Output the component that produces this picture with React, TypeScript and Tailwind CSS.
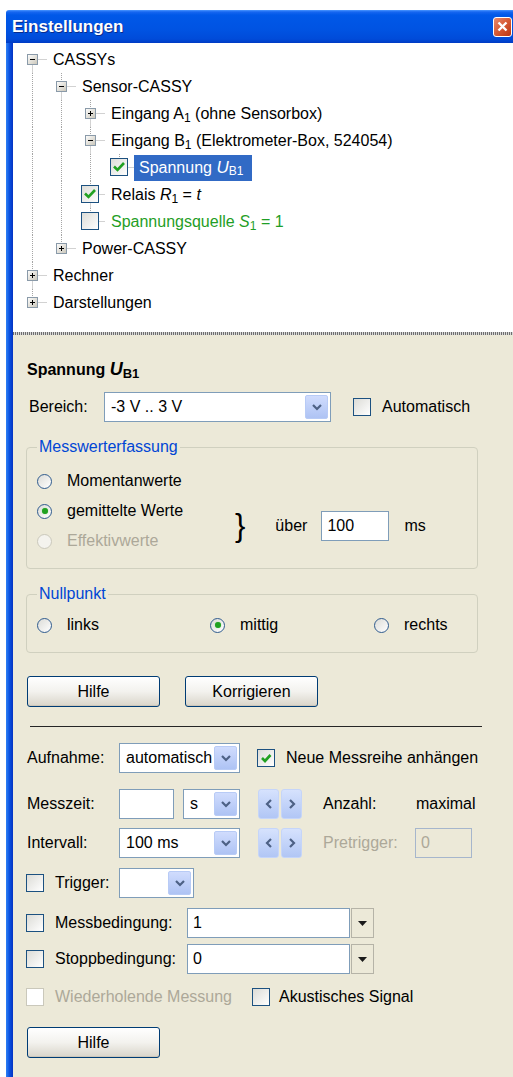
import type { ReactNode } from 'react';

const DOT = '#A5A5A5';

type Glyph = 'minus' | 'plus' | 'check' | 'empty';

type TreeItem = {
  pipes: number;
  glyph: Glyph;
  top: boolean;
  bottom: boolean;
  label: ReactNode;
  selected?: boolean;
  green?: boolean;
};

const tree: TreeItem[] = [
  { pipes: 0, glyph: 'minus', top: false, bottom: true, label: 'CASSYs' },
  { pipes: 1, glyph: 'minus', top: true, bottom: true, label: 'Sensor-CASSY' },
  {
    pipes: 2,
    glyph: 'plus',
    top: true,
    bottom: true,
    label: (
      <>
        Eingang A<sub className="text-[12px]">1</sub> (ohne Sensorbox)
      </>
    ),
  },
  {
    pipes: 2,
    glyph: 'minus',
    top: true,
    bottom: true,
    label: (
      <>
        Eingang B<sub className="text-[12px]">1</sub> (Elektrometer-Box, 524054)
      </>
    ),
  },
  {
    pipes: 3,
    glyph: 'check',
    top: true,
    bottom: false,
    selected: true,
    label: (
      <>
        Spannung&nbsp;<i className="text-[17px]">U</i>
        <sub className="text-[12px]">B1</sub>
      </>
    ),
  },
  {
    pipes: 2,
    glyph: 'check',
    top: true,
    bottom: true,
    label: (
      <>
        Relais <i>R</i>
        <sub className="text-[12px]">1</sub> = <i>t</i>
      </>
    ),
  },
  {
    pipes: 2,
    glyph: 'empty',
    top: true,
    bottom: false,
    green: true,
    label: (
      <>
        Spannungsquelle <i>S</i>
        <sub className="text-[12px]">1</sub> = 1
      </>
    ),
  },
  { pipes: 1, glyph: 'plus', top: true, bottom: false, label: 'Power-CASSY' },
  { pipes: 0, glyph: 'plus', top: true, bottom: true, label: 'Rechner' },
  { pipes: 0, glyph: 'plus', top: true, bottom: false, label: 'Darstellungen' },
];

function PipeCell() {
  return (
    <svg width="29" height="27" className="shrink-0">
      <line x1="14.5" y1="0" x2="14.5" y2="27" stroke={DOT} strokeDasharray="1 1" />
    </svg>
  );
}

function NodeCell({ glyph, top, bottom }: { glyph: Glyph; top: boolean; bottom: boolean }) {
  return (
    <svg width="29" height="27" className="shrink-0">
      <defs>
        <linearGradient id="tbox" x1="0" y1="0" x2="1" y2="1">
          <stop offset="0" stopColor="#ffffff" />
          <stop offset="1" stopColor="#c9c5b8" />
        </linearGradient>
        <linearGradient id="tchk" x1="0" y1="0" x2="1" y2="1">
          <stop offset="0" stopColor="#dcdcd7" />
          <stop offset="1" stopColor="#ffffff" />
        </linearGradient>
      </defs>
      {top && <line x1="14.5" y1="0" x2="14.5" y2="13.5" stroke={DOT} strokeDasharray="1 1" />}
      {bottom && <line x1="14.5" y1="13.5" x2="14.5" y2="27" stroke={DOT} strokeDasharray="1 1" />}
      <line x1="14.5" y1="13.5" x2="29" y2="13.5" stroke={DOT} strokeDasharray="1 1" />
      {(glyph === 'minus' || glyph === 'plus') && (
        <>
          <rect x="9.5" y="8.5" width="10" height="10" fill="url(#tbox)" stroke="#8a9aa9" />
          <rect x="12" y="13" width="5" height="1" fill="#000" />
          {glyph === 'plus' && <rect x="14" y="11" width="1" height="5" fill="#000" />}
        </>
      )}
      {(glyph === 'check' || glyph === 'empty') && (
        <>
          <rect x="5.5" y="4.5" width="17" height="17" fill="url(#tchk)" stroke="#1c5180" />
          {glyph === 'check' && (
            <path d="M9 12.5 L12.5 16 L19 9" fill="none" stroke="#21a121" strokeWidth="2.6" />
          )}
        </>
      )}
    </svg>
  );
}

function Checkbox({ checked, disabled }: { checked?: boolean; disabled?: boolean }) {
  return (
    <span
      className={`w-[18px] h-[18px] shrink-0 flex items-center justify-center border ${
        disabled
          ? 'border-[#cac8bb] bg-white'
          : 'border-[#1c5180] bg-gradient-to-br from-[#dcdcd7] to-white'
      }`}
    >
      {checked && (
        <svg width="12" height="12" viewBox="0 0 12 12">
          <path d="M2 6 L5 9 L10.5 3" fill="none" stroke="#21a121" strokeWidth="2.6" />
        </svg>
      )}
    </span>
  );
}

function Radio({ checked, disabled }: { checked?: boolean; disabled?: boolean }) {
  return (
    <span
      className={`w-[15px] h-[15px] shrink-0 rounded-full border flex items-center justify-center ${
        disabled
          ? 'border-[#cac8bb] bg-[#f4f3ee]'
          : 'border-[#2f5b8e] bg-gradient-to-br from-[#dcdcd7] to-white'
      }`}
    >
      {checked && <span className="w-[6px] h-[6px] rounded-full bg-[#21a121] shadow-[0_0_1px_#6fd36f]" />}
    </span>
  );
}

function DropArrow() {
  return (
    <span className="w-[23px] self-stretch m-[2px] ml-0 rounded-[2px] border border-[#b8cbf6] bg-gradient-to-b from-[#d0dcfd] to-[#aec3f4] flex items-center justify-center">
      <svg width="12" height="10" viewBox="0 0 12 10">
        <path d="M2 3 L6 7 L10 3" fill="none" stroke="#4d6185" strokeWidth="2.2" />
      </svg>
    </span>
  );
}

function Combo({ width, value }: { width: string; value?: string }) {
  return (
    <div className={`${width} h-[30px] shrink-0 flex items-center border border-[#7f9db9] bg-white`}>
      <span className="flex-1 pl-[6px] whitespace-nowrap overflow-hidden">{value}</span>
      <DropArrow />
    </div>
  );
}

function SpinButtons() {
  const btn =
    'w-[21px] h-[30px] rounded-[3px] border border-[#c5d5f9] bg-gradient-to-b from-[#d6e2fd] to-[#b1c6f5] flex items-center justify-center';
  return (
    <div className="flex gap-[2px] shrink-0">
      <span className={btn}>
        <svg width="10" height="12" viewBox="0 0 10 12">
          <path d="M7 2 L3 6 L7 10" fill="none" stroke="#4d6185" strokeWidth="2.2" />
        </svg>
      </span>
      <span className={btn}>
        <svg width="10" height="12" viewBox="0 0 10 12">
          <path d="M3 2 L7 6 L3 10" fill="none" stroke="#4d6185" strokeWidth="2.2" />
        </svg>
      </span>
    </div>
  );
}

function XpButton({ children }: { children: ReactNode }) {
  return (
    <button className="w-[133px] h-[31px] rounded-[3px] border border-[#003c74] bg-gradient-to-b from-white via-[#f3f2ee] to-[#d9d5ca] text-black shadow-[inset_0_-1px_0_#cdc7ba]">
      {children}
    </button>
  );
}

function ConditionInput({ value }: { value: string }) {
  return (
    <div className="flex h-[30px] shrink-0">
      <div className="w-[163px] border border-[#7f9db9] bg-white flex items-center pl-[5px]">{value}</div>
      <span className="w-[23px] ml-px border border-[#b5b3a7] bg-[#ece9d8] flex items-center justify-center">
        <svg width="9" height="5" viewBox="0 0 9 5">
          <path d="M0 0 H9 L4.5 5 Z" fill="#1a1a1a" />
        </svg>
      </span>
    </div>
  );
}

export default function App() {
  return (
    <div className="w-[513px] h-[1077px] overflow-hidden bg-white pt-[10px] pl-[6px] font-['Liberation_Sans',Arial,sans-serif] text-[16px] text-black">
      <div className="flex flex-col h-full">
        {/* title bar */}
        <div className="h-[33px] shrink-0 flex items-center justify-between pl-[6px] pr-[1px] rounded-tl-[3px] bg-[linear-gradient(180deg,#4a96ff_0px,#1666f0_2px,#0058e8_5px,#0053e2_60%,#004bd9_88%,#003bc4_100%)]">
          <span className="text-white font-bold text-[17px] [text-shadow:1px_1px_0_#0a2b8c]">Einstellungen</span>
          <span className="w-[19px] h-[20px] rounded-[3px] border border-white bg-gradient-to-br from-[#e8896c] via-[#d65a34] to-[#b93512] flex items-center justify-center">
            <svg width="11" height="11" viewBox="0 0 11 11">
              <path d="M1.5 1.5 L9.5 9.5 M9.5 1.5 L1.5 9.5" stroke="#fff" strokeWidth="2.4" />
            </svg>
          </span>
        </div>

        <div className="flex flex-1 min-h-0">
          <div className="w-[7px] shrink-0 bg-gradient-to-r from-[#2f80f5] via-[#0a50e0] to-[#0533c2]" />

          <div className="flex-1 flex flex-col">
            {/* tree */}
            <div className="h-[289px] bg-white pt-[3px] pl-[5px]">
              {tree.map((row, i) => (
                <div key={i} className="flex items-center h-[27px] whitespace-nowrap">
                  {Array.from({ length: row.pipes }).map((_, j) => (
                    <PipeCell key={j} />
                  ))}
                  <NodeCell glyph={row.glyph} top={row.top} bottom={row.bottom} />
                  {row.selected ? (
                    <span className="h-[26px] flex items-center pl-[5px] pr-[9px] bg-[#316ac5] text-white">
                      {row.label}
                    </span>
                  ) : (
                    <span className={`pl-[6px] ${row.green ? 'text-[#1f9e26]' : ''}`}>{row.label}</span>
                  )}
                </div>
              ))}
            </div>

            {/* splitter */}
            <div className="h-[3px] bg-[repeating-linear-gradient(90deg,#6e6e6e_0px,#6e6e6e_1px,#d8d8d8_1px,#d8d8d8_2px)]" />

            {/* properties */}
            <div className="flex-1 bg-[#ece9d8] pl-[13px] flex flex-col">
              <div className="mt-[21px] ml-[1px] h-[20px] flex items-baseline font-bold">
                Spannung&nbsp;<i className="text-[18px]">U</i>
                <sub className="text-[13px]">B1</sub>
              </div>

              <div className="mt-[16px] h-[30px] flex items-center">
                <span className="ml-[3px] w-[75px]">Bereich:</span>
                <Combo width="w-[227px]" value="-3 V .. 3 V" />
                <span className="ml-[22px]">
                  <Checkbox />
                </span>
                <span className="ml-[11px]">Automatisch</span>
              </div>

              <fieldset className="mt-[15px] w-[452px] border border-[#d0d0bf] rounded-[4px] pl-[10px] pb-[12px]">
                <legend className="px-[2px] leading-[20px] text-[#0046d5]">Messwerterfassung</legend>
                <div className="flex">
                  <div className="w-[198px] pt-[9px] flex flex-col">
                    <div className="h-[30px] flex items-center gap-[15px]">
                      <Radio />
                      Momentanwerte
                    </div>
                    <div className="h-[30px] flex items-center gap-[15px]">
                      <Radio checked />
                      gemittelte Werte
                    </div>
                    <div className="h-[30px] flex items-center gap-[15px] text-[#aca899]">
                      <Radio disabled />
                      Effektivwerte
                    </div>
                  </div>
                  <div className="self-end h-[60px] flex items-center">
                    <span className="text-[31px] leading-none -mt-[1px]">{'}'}</span>
                    <span className="ml-[30px]">über</span>
                    <span className="ml-[14px] w-[68px] h-[30px] border border-[#7f9db9] bg-white flex items-center pl-[5px]">
                      100
                    </span>
                    <span className="ml-[15px]">ms</span>
                  </div>
                </div>
              </fieldset>

              <fieldset className="mt-[15px] w-[452px] border border-[#d0d0bf] rounded-[4px] pl-[10px] pt-[6px] pb-[12px]">
                <legend className="px-[2px] leading-[20px] text-[#0046d5]">Nullpunkt</legend>
                <div className="h-[30px] flex items-center">
                  <div className="w-[173px] flex items-center gap-[15px]">
                    <Radio />
                    links
                  </div>
                  <div className="w-[164px] flex items-center gap-[15px]">
                    <Radio checked />
                    mittig
                  </div>
                  <div className="flex items-center gap-[15px]">
                    <Radio />
                    rechts
                  </div>
                </div>
              </fieldset>

              <div className="mt-[23px] ml-[1px] flex gap-[25px]">
                <XpButton>Hilfe</XpButton>
                <XpButton>Korrigieren</XpButton>
              </div>

              <div className="mt-[19px] ml-[4px] w-[452px] h-px bg-[#262626]" />

              <div className="mt-[16px] h-[30px] flex items-center">
                <span className="ml-[1px] w-[92px]">Aufnahme:</span>
                <Combo width="w-[121px]" value="automatisch" />
                <span className="ml-[17px]">
                  <Checkbox checked />
                </span>
                <span className="ml-[11px]">Neue Messreihe anhängen</span>
              </div>

              <div className="mt-[16px] h-[30px] flex items-center">
                <span className="ml-[1px] w-[92px]">Messzeit:</span>
                <span className="w-[55px] h-[30px] border border-[#7f9db9] bg-white" />
                <span className="ml-[9px]">
                  <Combo width="w-[57px]" value="s" />
                </span>
                <span className="ml-[18px]">
                  <SpinButtons />
                </span>
                <span className="ml-[21px] w-[93px]">Anzahl:</span>
                <span>maximal</span>
              </div>

              <div className="mt-[9px] h-[30px] flex items-center">
                <span className="ml-[1px] w-[92px]">Intervall:</span>
                <Combo width="w-[121px]" value="100 ms" />
                <span className="ml-[18px]">
                  <SpinButtons />
                </span>
                <span className="ml-[21px] w-[92px] text-[#aca899]">Pretrigger:</span>
                <span className="w-[57px] h-[30px] border border-[#a6b6cc] flex items-center pl-[5px] text-[#aca899]">
                  0
                </span>
              </div>

              <div className="mt-[10px] h-[30px] flex items-center">
                <Checkbox />
                <span className="ml-[11px] w-[64px]">Trigger:</span>
                <Combo width="w-[75px]" />
              </div>

              <div className="mt-[10px] h-[30px] flex items-center">
                <Checkbox />
                <span className="ml-[11px] w-[132px]">Messbedingung:</span>
                <ConditionInput value="1" />
              </div>

              <div className="mt-[6px] h-[30px] flex items-center">
                <Checkbox />
                <span className="ml-[11px] w-[132px]">Stoppbedingung:</span>
                <ConditionInput value="0" />
              </div>

              <div className="mt-[13px] h-[20px] flex items-center">
                <Checkbox disabled />
                <span className="ml-[11px] w-[197px] text-[#aca899]">Wiederholende Messung</span>
                <Checkbox />
                <span className="ml-[9px]">Akustisches Signal</span>
              </div>

              <div className="mt-[20px] ml-[1px]">
                <XpButton>Hilfe</XpButton>
              </div>
            </div>
          </div>
        </div>
      </div>
    </div>
  );
}
